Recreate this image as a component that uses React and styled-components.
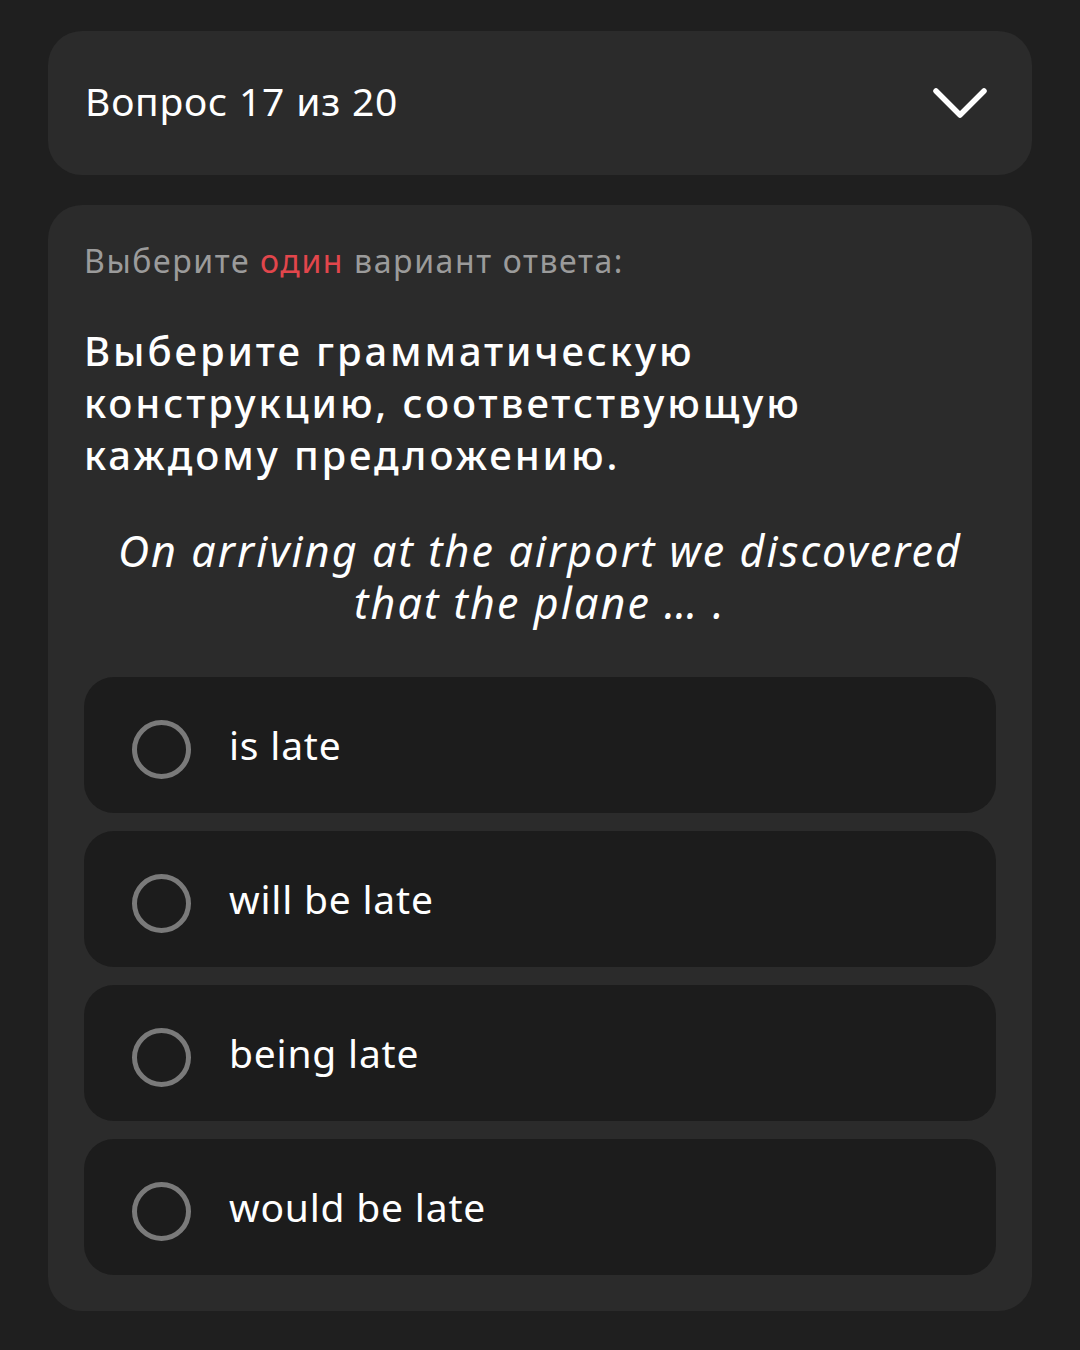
import React from 'react';
import styled, { createGlobalStyle } from 'styled-components';

const GlobalStyle = createGlobalStyle`
  html, body {
    margin: 0;
    padding: 0;
    background: #1f1f1f;
  }
  body {
    font-family: 'Noto Sans', 'Open Sans', sans-serif;
    color: #ffffff;
  }
`;

const options = ['is late', 'will be late', 'being late', 'would be late'];

const ChevronDown = () => (
  <svg width="56" height="36" viewBox="0 0 56 36" fill="none">
    <path d="M4 6 L28 30 L52 6" stroke="#ffffff" strokeWidth="5.5" strokeLinecap="round" strokeLinejoin="round" />
  </svg>
);

const App = () => {
  return (
    <>
      <GlobalStyle />
      <St.Page>
        <St.Header>
          <St.HeaderTitle>Вопрос 17 из 20</St.HeaderTitle>
          <ChevronDown />
        </St.Header>
        <St.Card>
          <St.Hint>
            Выберите <St.Accent>один</St.Accent> вариант ответа:
          </St.Hint>
          <St.Question>
            Выберите грамматическую
            <br />
            конструкцию, соответствующую
            <br />
            каждому предложению.
          </St.Question>
          <St.Sentence>
            On arriving at the airport we discovered
            <br />
            that the plane … .
          </St.Sentence>
          <St.OptionList>
            {options.map((option) => (
              <St.Option key={option}>
                <St.Radio />
                <St.OptionText>{option}</St.OptionText>
              </St.Option>
            ))}
          </St.OptionList>
        </St.Card>
      </St.Page>
    </>
  );
};

export default App;

const St = {
  Page: styled.div`
    display: flex;
    flex-direction: column;
    gap: 30px;

    width: 1080px;
    min-height: 1350px;
    padding: 31px 48px 40px;
    box-sizing: border-box;
  `,
  Header: styled.div`
    display: flex;
    align-items: center;
    justify-content: space-between;

    height: 144px;
    padding: 0 44px 0 37px;
    box-sizing: border-box;

    border-radius: 34px;
    background-color: #2b2b2b;
  `,
  HeaderTitle: styled.div`
    margin-top: -5px;

    font-size: 39px;
    font-weight: 400;
    letter-spacing: 0.8px;
  `,
  Card: styled.div`
    display: flex;
    flex-direction: column;

    padding: 36px 36px 36px;

    border-radius: 34px;
    background-color: #2b2b2b;
  `,
  Hint: styled.div`
    color: #9b9b9b;
    font-size: 32px;
    line-height: 40px;
    letter-spacing: 1.6px;
  `,
  Accent: styled.span`
    color: #e2464c;
  `,
  Question: styled.div`
    margin-top: 44px;

    font-size: 40px;
    font-weight: 500;
    line-height: 52px;
    letter-spacing: 2.9px;
  `,
  Sentence: styled.div`
    margin-top: 44px;

    font-size: 43px;
    font-style: italic;
    line-height: 52px;
    letter-spacing: 2.1px;
    text-align: center;
  `,
  OptionList: styled.div`
    display: flex;
    flex-direction: column;
    gap: 18px;

    margin-top: 48px;
  `,
  Option: styled.div`
    display: flex;
    align-items: center;
    gap: 38px;

    height: 136px;
    padding: 0 48px;
    box-sizing: border-box;

    border-radius: 30px;
    background-color: #1c1c1c;
  `,
  Radio: styled.div`
    flex-shrink: 0;
    margin-top: 8px;

    width: 59px;
    height: 59px;
    box-sizing: border-box;

    border: 5px solid #7a7a7a;
    border-radius: 50%;
  `,
  OptionText: styled.div`
    font-size: 39px;
    line-height: 48px;
    letter-spacing: 0.8px;
  `,
};
